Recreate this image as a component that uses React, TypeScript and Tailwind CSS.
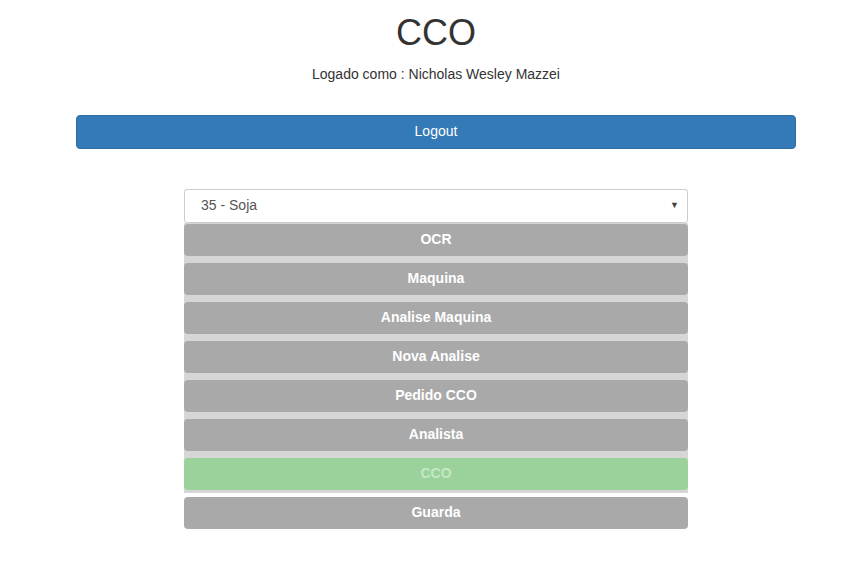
const items = ["OCR", "Maquina", "Analise Maquina", "Nova Analise", "Pedido CCO", "Analista"];

const App = () => {
  return (
    <div className="min-h-[576px] bg-white font-['Liberation_Sans',Arial,sans-serif] text-[#333]">
      <div className="ml-[76px] w-[720px] pt-[13px]">
        <h1 className="text-center text-[36px] leading-[39.6px]">CCO</h1>
        <p className="mt-[11px] text-center text-[14px] leading-[20px]">
          Logado como : Nicholas Wesley Mazzei
        </p>
        <button className="mt-[31px] h-[34px] w-full rounded-[4px] border border-[#2e6da4] bg-[#337ab7] text-[14px] text-white">
          Logout
        </button>

        <div className="mx-auto mt-[40px] w-[504px]">
          <div className="flex h-[34px] items-center justify-between rounded-[3px] border border-[#ccc] bg-white pl-[16px] pr-[8px] text-[14px] text-[#555]">
            <span>35 - Soja</span>
            <span className="text-[9px] text-[#444]">▼</span>
          </div>
          <div className="bg-[#d6d6d6] pt-[1px]">
            {items.map((name) => (
              <div key={name} className="pb-[7px]">
                <div className="flex h-[32px] items-center justify-center rounded-[4px] bg-[#a9a9a9] text-[14px] font-bold text-white">
                  {name}
                </div>
              </div>
            ))}
            <div className="pb-[3px]">
              <div className="flex h-[32px] items-center justify-center rounded-[4px] bg-[#9bd29b] text-[14px] font-bold text-[#c6e7c6]">
                CCO
              </div>
            </div>
          </div>
          <div className="mt-[4px] flex h-[32px] items-center justify-center rounded-[4px] bg-[#a9a9a9] text-[14px] font-bold text-white">
            Guarda
          </div>
        </div>
      </div>
    </div>
  );
};

export default App;
